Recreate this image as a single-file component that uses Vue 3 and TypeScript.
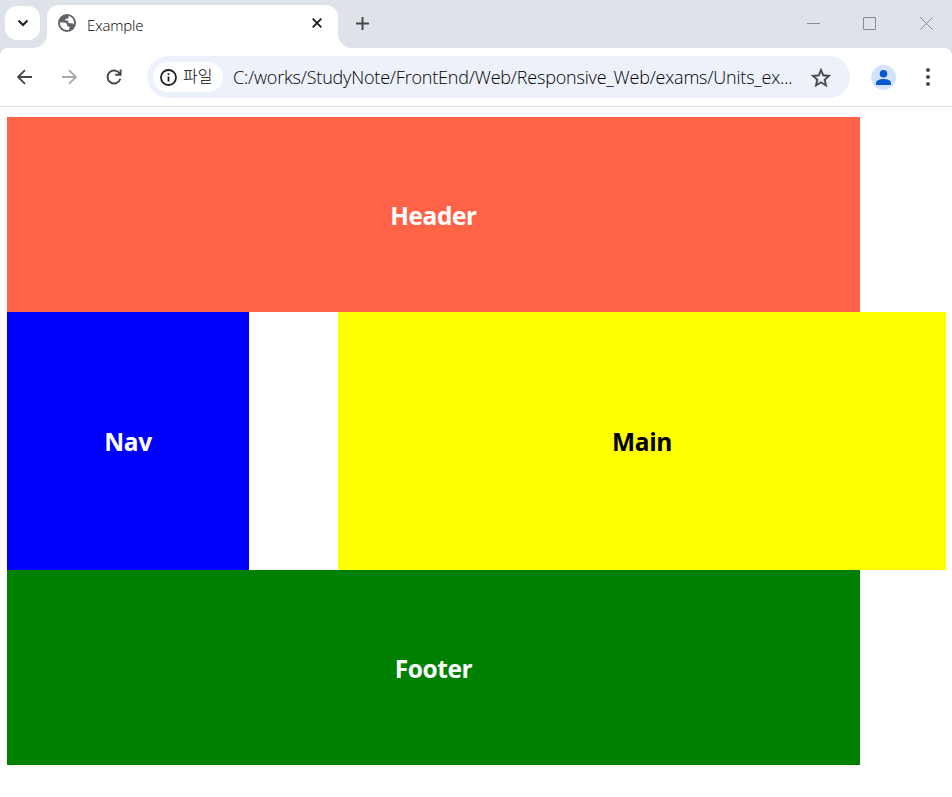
<script setup lang="ts">
interface Panel {
  name: string
  label: string
}

const address = 'C:/works/StudyNote/FrontEnd/Web/Responsive_Web/exams/Units_ex...'
const middle: Panel[] = [
  { name: 'nav', label: 'Nav' },
  { name: 'main', label: 'Main' },
]
</script>

<template>
  <div class="window">
    <div class="tabstrip">
      <button class="tab-search" aria-label="Search tabs">
        <svg width="12" height="8" viewBox="0 0 12 8"><path d="M1.500 1.500 6 6l4.500-4.500" fill="none" stroke="#1f1f1f" stroke-width="2" /></svg>
      </button>
      <div class="tab">
        <svg class="globe" width="18" height="18" viewBox="0 0 18 18">
          <circle cx="9" cy="9" r="9" fill="#5f6368" />
          <path d="M10.600 2.100C13.800 2.800 16.100 5.600 16.100 9c0 .5-.1 1-.2 1.500-.7-.9-1.500-1.300-2.600-1.300h-1.500c-1 0-1.700-.7-1.700-1.700V6.600H7.400V4.800h1.700c.9 0 1.500-.7 1.500-1.500z" fill="#fff" />
          <path d="M1.900 8.600H6c1.900 0 3.200 1.200 3.200 2.800v1h2.200v2.100c0 .6-.4 1.200-.9 1.500-4.800.8-8.700-2.700-8.600-7.400z" fill="#fff" />
        </svg>
        <span class="tab-title">Example</span>
        <svg class="tab-close" width="10" height="10" viewBox="0 0 10 10"><path d="m.7.7 8.600 8.600M9.300.7.7 9.300" stroke="#1f1f1f" stroke-width="1.900" /></svg>
      </div>
      <svg class="new-tab" width="13" height="13" viewBox="0 0 13 13"><path d="M6.500 0v13M0 6.500h13" stroke="#474747" stroke-width="2" /></svg>
      <div class="controls">
        <svg width="13" height="13" viewBox="0 0 13 13"><path d="M0 6.500h13" stroke="#8a8c8f" /></svg>
        <svg width="13" height="13" viewBox="0 0 13 13"><path d="M.5.5h12v12H.5z" fill="none" stroke="#8a8c8f" /></svg>
        <svg class="window-close" width="13" height="13" viewBox="0 0 13 13"><path d="m.3.3 12.400 12.400M12.700.3.3 12.700" stroke="#8a8c8f" /></svg>
      </div>
    </div>
    <div class="toolbar">
      <svg class="back" width="16" height="16" viewBox="0 0 16 16"><path d="M15 8H1.500M8 1.100 1.100 8 8 14.900" fill="none" stroke="#474747" stroke-width="1.800" /></svg>
      <svg class="forward" width="16" height="16" viewBox="0 0 16 16"><path d="M1 8h13.500M8 1.100 14.900 8 8 14.900" fill="none" stroke="#a9a9a9" stroke-width="1.800" /></svg>
      <svg class="reload" width="16" height="16" viewBox="0 0 16 16"><path d="M14 5.300A6.500 6.500 0 1 0 14.300 9.800M14.600.5v5.200H9.200" fill="none" stroke="#474747" stroke-width="1.900" /></svg>
      <div class="omnibox">
        <div class="chip">
          <svg width="17" height="17" viewBox="0 0 17 17"><circle cx="8.500" cy="8.500" r="7.500" fill="none" stroke="#1f1f1f" stroke-width="1.800" /><path d="M8.500 7.500v5M8.500 4.300v1.800" stroke="#1f1f1f" stroke-width="1.800" /></svg>
          <span class="chip-label">파일</span>
        </div>
        <span class="address">{{ address }}</span>
        <svg class="star" width="20" height="19" viewBox="2 2 20 19"><path d="m22 9.240-7.190-.62L12 2 9.190 8.630 2 9.240l5.460 4.730L5.820 21 12 17.270 18.180 21l-1.630-7.030L22 9.240zM12 15.400l-3.760 2.270 1-4.280-3.320-2.880 4.380-.38L12 6.100l1.710 4.040 4.380.38-3.320 2.880 1 4.280L12 15.400z" fill="#474747" stroke="#474747" stroke-width=".3" /></svg>
      </div>
      <div class="avatar">
        <svg width="15" height="15" viewBox="0 0 15 15"><circle cx="7.500" cy="3.800" r="3.800" fill="#0b57d0" /><path d="M0 15v-2.200C0 10.400 4 9 7.500 9s7.500 1.400 7.500 3.800V15z" fill="#0b57d0" /></svg>
      </div>
      <svg class="more" width="4" height="18" viewBox="0 0 4 18"><g fill="#474747"><circle cx="2" cy="2" r="2" /><circle cx="2" cy="9" r="2" /><circle cx="2" cy="16" r="2" /></g></svg>
    </div>
    <div class="page">
      <header class="panel header"><span>Header</span></header>
      <div class="middle">
        <section v-for="panel in middle" :key="panel.name" class="panel" :class="panel.name"><span>{{ panel.label }}</span></section>
      </div>
      <footer class="panel footer"><span>Footer</span></footer>
    </div>
  </div>
</template>

<style scoped>
.window {
  width: 952px;
  height: 797px;
  overflow: hidden;
  background: #fff;
  font-family: "Open Sans", "Noto Sans CJK KR", sans-serif;
}
.tabstrip {
  display: flex;
  height: 48px;
  background: #dee2e9;
}
.tab-search {
  display: flex;
  align-items: center;
  justify-content: center;
  width: 35px;
  height: 34px;
  margin: 6px 7px 0 5px;
  padding: 0;
  border: 0;
  border-radius: 12px;
  background: #fff;
}
.tab {
  position: relative;
  display: flex;
  box-sizing: border-box;
  width: 291px;
  height: 43px;
  margin-top: 5px;
  padding: 0 16px 0 11px;
  border-radius: 12px 12px 0 0;
  background: #fff;
}
.tab::before,
.tab::after {
  content: "";
  position: absolute;
  bottom: 0;
  width: 14px;
  height: 14px;
}
.tab::before {
  right: 100%;
  background: radial-gradient(circle at 0 0, transparent 13.5px, #fff 14.5px);
}
.tab::after {
  left: 100%;
  background: radial-gradient(circle at 100% 0, transparent 13.5px, #fff 14.5px);
}
.globe {
  margin-top: 9px;
}
.tab-title {
  margin: 10px auto 0 11px;
  color: #000;
  font-size: 15px;
  font-weight: 300;
  letter-spacing: -0.15px;
  line-height: 20px;
}
.tab-close {
  margin-top: 13px;
}
.new-tab {
  margin: 17px 0 0 18px;
}
.controls {
  display: flex;
  gap: 43px;
  margin: 17px 19px 0 auto;
}
.window-close {
  margin-left: 1px;
}
.toolbar {
  display: flex;
  align-items: center;
  box-sizing: border-box;
  height: 59px;
  padding: 0 22px 0 17px;
  border-bottom: 1px solid #dedfe1;
  background: #fff;
  border-radius: 8px 8px 0 0;
  box-shadow: 0 -10px 0 #dee2e9;
  clip-path: inset(0);
}
.forward {
  margin-left: 28px;
}
.reload {
  margin-left: 29px;
}
.omnibox {
  display: flex;
  align-items: center;
  box-sizing: border-box;
  width: 703px;
  height: 42px;
  margin-left: 25px;
  padding: 0 19px 0 6px;
  border-radius: 21px;
  background: #ecf1fa;
}
.chip {
  display: flex;
  align-items: center;
  box-sizing: border-box;
  width: 70px;
  height: 30px;
  padding-left: 7px;
  border-radius: 15px;
  background: #fff;
}
.chip-label {
  margin: -4px 0 0 6px;
  color: #000;
  font-family: "Noto Sans CJK KR", sans-serif;
  font-size: 16px;
  font-weight: 300;
  line-height: 22px;
}
.address {
  margin: 0 auto 0 10px;
  color: #000;
  font-size: 18px;
  font-weight: 300;
  letter-spacing: -0.19px;
  white-space: nowrap;
}
.avatar {
  display: flex;
  align-items: center;
  justify-content: center;
  width: 25px;
  height: 25px;
  margin: 0 auto 0 21px;
  border-radius: 50%;
  background: #d3e3fd;
}
.page {
  padding: 10px 6px 0 7px;
}
.panel {
  display: flex;
  align-items: center;
  justify-content: center;
  box-sizing: border-box;
  padding-top: 2px;
  color: #fff;
  font-size: 24.5px;
  font-weight: 700;
  letter-spacing: -0.4px;
  line-height: 34px;
}
.header,
.footer {
  width: 853px;
  height: 195px;
}
.header {
  background: tomato;
}
.middle {
  display: flex;
  justify-content: space-between;
  height: 258px;
}
.nav {
  width: 242px;
  background: blue;
}
.main {
  width: 608px;
  background: yellow;
  color: #000;
}
.footer {
  background: green;
}
</style>

<style>
body {
  background: #fff;
}
</style>
